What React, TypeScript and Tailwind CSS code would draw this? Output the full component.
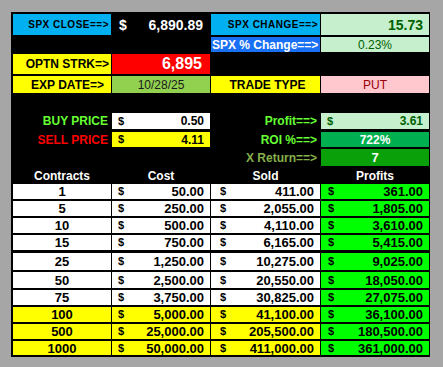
const rows = [
  { c: "1", cost: "50.00", sold: "411.00", p: "361.00", h: "h-[15px]", hi: false },
  { c: "5", cost: "250.00", sold: "2,055.00", p: "1,805.00", h: "h-[15px]", hi: false },
  { c: "10", cost: "500.00", sold: "4,110.00", p: "3,610.00", h: "h-[15px]", hi: false },
  { c: "15", cost: "750.00", sold: "6,165.00", p: "5,415.00", h: "h-[15px]", hi: false },
  { c: "25", cost: "1,250.00", sold: "10,275.00", p: "9,025.00", h: "h-[17px] mt-[1px]", hi: false },
  { c: "50", cost: "2,500.00", sold: "20,550.00", p: "18,050.00", h: "h-[16px]", hi: false },
  { c: "75", cost: "3,750.00", sold: "30,825.00", p: "27,075.00", h: "h-[15px]", hi: false },
  { c: "100", cost: "5,000.00", sold: "41,100.00", p: "36,100.00", h: "h-[15px]", hi: true },
  { c: "500", cost: "25,000.00", sold: "205,500.00", p: "180,500.00", h: "h-[15px]", hi: true },
  { c: "1000", cost: "50,000.00", sold: "411,000.00", p: "361,000.00", h: "h-[14px]", hi: true },
];

const Money = ({ v, cls }: { v: string; cls: string }) => (
  <div className={`flex items-center justify-between pr-[6px] ${cls}`}>
    <span className="text-[11px]">$</span>
    <span>{v}</span>
  </div>
);

const App = () => {
  return (
    <div
      className="w-[443px] h-[367px] bg-[#a6a6a6] pl-[11px] pt-[12px] font-bold text-black leading-none"
      style={{ fontFamily: '"Liberation Sans", Arial, sans-serif' }}
    >
      <div className="w-[419px] h-[345px] bg-black pl-[2px] pt-[2px]">
        {/* top block */}
        <div className="grid grid-cols-[98px_98px_109px_108px] gap-x-[1px]">
          <div className="h-[21px] bg-[#00b0f0] flex items-end justify-end pr-[2px] pb-[5px] text-[10px] tracking-[0.5px]">
            SPX CLOSE==&gt;
          </div>
          <div className="h-[21px] flex items-center justify-between pl-[7px] pr-[7px] text-white text-[14px]">
            <span>$</span>
            <span>6,890.89</span>
          </div>
          <div className="h-[21px] bg-[#00b0f0] flex items-end justify-end pr-[2px] pb-[5px] text-[10px] tracking-[0.5px]">
            SPX CHANGE==&gt;
          </div>
          <div className="h-[21px] bg-[#c6efce] flex items-center justify-end pr-[6px] text-[#006100] text-[14px]">
            15.73
          </div>

          <div className="h-[15px] mt-[2px]" />
          <div className="h-[15px] mt-[2px]" />
          <div className="h-[15px] mt-[2px] bg-[#1a70f5] flex items-center text-white text-[12px] pl-[1px] whitespace-nowrap overflow-hidden">
            SPX % Change==&gt;
          </div>
          <div className="h-[15px] mt-[2px] bg-[#c6efce] flex items-center justify-center text-[#006100] text-[12px] font-normal">
            0.23%
          </div>

          <div className="h-[20px] mt-[2px] bg-[#ffff00] flex items-end justify-end pr-[2px] pb-[4px] text-[12px]">
            OPTN STRK=&gt;
          </div>
          <div className="h-[20px] mt-[2px] bg-[#ff0000] flex items-center justify-end pr-[8px] text-white text-[16px]">
            6,895
          </div>
          <div className="h-[20px] mt-[2px]" />
          <div className="h-[20px] mt-[2px]" />

          <div className="h-[17px] mt-[2px] bg-[#ffff00] flex items-center justify-end pr-[7px] text-[12px]">
            EXP DATE=&gt;
          </div>
          <div className="h-[17px] mt-[2px] bg-[#92d050] flex items-center justify-center text-[12px] font-normal text-[#1a1a1a]">
            10/28/25
          </div>
          <div className="h-[17px] mt-[2px] bg-[#ffff00] flex items-center justify-center pl-[4px] text-[12px]">
            TRADE TYPE
          </div>
          <div className="h-[17px] mt-[2px] bg-[#ffc7ce] flex items-center justify-center text-[12px] font-normal text-[#9c0006]">
            PUT
          </div>

          <div className="h-[16px] mt-[20px] flex items-center justify-end pr-[3px] text-[12px] text-[#66ff33]">
            BUY PRICE
          </div>
          <Money v="0.50" cls="h-[16px] mt-[20px] pl-[6px] bg-white text-[12px]" />
          <div className="h-[16px] mt-[20px] flex items-center justify-end pr-[3px] text-[12px] text-[#66ff33]">
            Profit==&gt;
          </div>
          <Money v="3.61" cls="h-[16px] mt-[20px] pl-[6px] bg-[#c6efce] text-[12px] text-[#006100]" />

          <div className="h-[15px] mt-[3px] flex items-center justify-end pr-[3px] text-[12px] text-[#ff0000]">
            SELL PRICE
          </div>
          <Money v="4.11" cls="h-[15px] mt-[3px] pl-[6px] bg-[#ffff00] text-[12px]" />
          <div className="h-[15px] mt-[3px] flex items-center justify-end pr-[3px] text-[12px] text-[#66ff33]">
            ROI %==&gt;
          </div>
          <div className="h-[15px] mt-[3px] bg-[#00b050] flex items-center justify-center text-white text-[12px]">
            722%
          </div>

          <div className="h-[17px] mt-[2px]" />
          <div className="h-[17px] mt-[2px]" />
          <div className="h-[17px] mt-[2px] flex items-center justify-end pr-[3px] text-[12px] text-[#86b04a]">
            X Return==&gt;
          </div>
          <div className="h-[17px] mt-[2px] bg-[#0aa00a] flex items-center justify-center text-white text-[13px]">
            7
          </div>
        </div>

        {/* table */}
        <div className="grid grid-cols-[98px_98px_109px_108px] gap-x-[1px] text-white text-[12px] h-[17px] items-center mt-[1px]">
          <div className="text-center">Contracts</div>
          <div className="text-center">Cost</div>
          <div className="text-center">Sold</div>
          <div className="text-center">Profits</div>
        </div>
        <div className="flex flex-col gap-[2px]">
          {rows.map((r) => (
            <div
              key={r.c}
              className={`grid grid-cols-[98px_98px_109px_108px] grid-rows-[100%] gap-x-[1px] text-[13px] overflow-hidden ${r.h}`}
            >
              <div className={`flex items-center justify-center ${r.hi ? "bg-[#ffff00]" : "bg-white"}`}>
                {r.c}
              </div>
              <Money v={r.cost} cls={`pl-[6px] ${r.hi ? "bg-[#ffff00]" : "bg-white"}`} />
              <Money v={r.sold} cls={`pl-[9px] ${r.hi ? "bg-[#ffff00]" : "bg-white"}`} />
              <Money v={r.p} cls="pl-[7px] bg-[#00ff00]" />
            </div>
          ))}
        </div>
      </div>
    </div>
  );
};

export default App;
